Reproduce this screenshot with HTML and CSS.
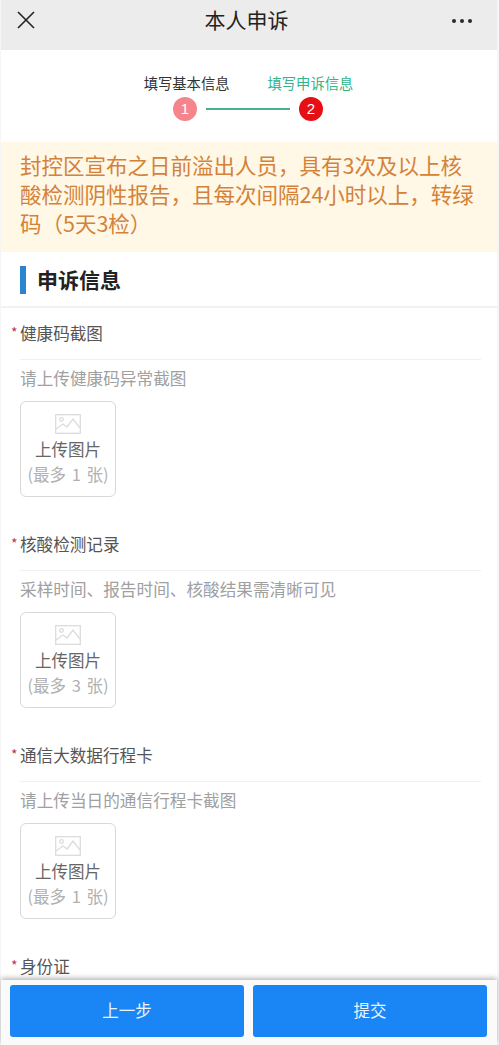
FILE: index.html
```html
<!DOCTYPE html>
<html lang="zh-CN">
<head>
<meta charset="utf-8">
<title>本人申诉</title>
<link rel="stylesheet" href="styles.css">
</head>
<body>
<div class="app">
  <header class="nav">
    <svg class="nav-close" width="20" height="20" viewBox="0 0 20 20"><path d="M2 2 L18 18 M18 2 L2 18" stroke="#222" stroke-width="1.6" fill="none"/></svg>
    <h1 class="nav-title">本人申诉</h1>
    <div class="nav-more"><i></i><i></i><i></i></div>
  </header>
  <main class="content">
    <section class="steps">
      <div class="step-labels">
        <span class="step-label">填写基本信息</span>
        <span class="step-label step-label-active">填写申诉信息</span>
      </div>
      <div class="step-track">
        <span class="step-dot step-dot-done">1</span>
        <span class="step-line"></span>
        <span class="step-dot step-dot-active">2</span>
      </div>
    </section>
    <section class="notice">封控区宣布之日前溢出人员，具有3次及以上核酸检测阴性报告，且每次间隔24小时以上，转绿码（5天3检）</section>
    <h2 class="section-title"><span class="section-bar"></span><span class="section-text">申诉信息</span></h2>
    <div class="form">
      <div class="field">
        <div class="field-label"><span class="req">*</span>健康码截图</div>
        <div class="field-body">
          <p class="hint">请上传健康码异常截图</p>
          <div class="upload">
            <svg class="upload-icon" width="26" height="20" viewBox="0 0 26 20"><g fill="none" stroke="#dcdcdc" stroke-width="1.3"><rect x=".7" y=".7" width="24.6" height="18.6"/><path d="M1 15 L8 10 L12 13 L18 5 L25 14"/><circle cx="6.500" cy="5.500" r="1.800"/></g></svg>
            <span class="upload-text">上传图片</span>
            <span class="upload-limit">(最多 1 张)</span>
          </div>
        </div>
      </div>
      <div class="field">
        <div class="field-label"><span class="req">*</span>核酸检测记录</div>
        <div class="field-body">
          <p class="hint">采样时间、报告时间、核酸结果需清晰可见</p>
          <div class="upload">
            <svg class="upload-icon" width="26" height="20" viewBox="0 0 26 20"><g fill="none" stroke="#dcdcdc" stroke-width="1.3"><rect x=".7" y=".7" width="24.6" height="18.6"/><path d="M1 15 L8 10 L12 13 L18 5 L25 14"/><circle cx="6.500" cy="5.500" r="1.800"/></g></svg>
            <span class="upload-text">上传图片</span>
            <span class="upload-limit">(最多 3 张)</span>
          </div>
        </div>
      </div>
      <div class="field">
        <div class="field-label"><span class="req">*</span>通信大数据行程卡</div>
        <div class="field-body">
          <p class="hint">请上传当日的通信行程卡截图</p>
          <div class="upload">
            <svg class="upload-icon" width="26" height="20" viewBox="0 0 26 20"><g fill="none" stroke="#dcdcdc" stroke-width="1.3"><rect x=".7" y=".7" width="24.6" height="18.6"/><path d="M1 15 L8 10 L12 13 L18 5 L25 14"/><circle cx="6.500" cy="5.500" r="1.800"/></g></svg>
            <span class="upload-text">上传图片</span>
            <span class="upload-limit">(最多 1 张)</span>
          </div>
        </div>
      </div>
      <div class="field">
        <div class="field-label"><span class="req">*</span>身份证</div>
      </div>
    </div>
  </main>
  <footer class="actions">
    <button class="btn" type="button">上一步</button>
    <button class="btn" type="button">提交</button>
  </footer>
</div>
</body>
</html>
```
FILE: styles.css
```css
* { box-sizing: border-box; }
html, body { margin: 0; padding: 0; height: 100%; overflow: hidden; background: #f6f6f6; }
body { font-family: "Noto Sans CJK SC", "Liberation Sans", sans-serif; }
.app { width: 496px; height: 1045px; margin-left: 1px; display: flex; flex-direction: column; background: #fff; }

.nav { flex: none; height: 50px; background: #ececec; display: flex; align-items: center; justify-content: space-between; padding: 0 25px 10px 15px; position: relative; }
.nav-title { position: absolute; left: 0; right: 5px; top: 4px; margin: 0; text-align: center; font-size: 21px; line-height: 30px; font-weight: 400; color: #222; }
.nav-more { display: flex; gap: 3.500px; margin-top: 2px; }
.nav-more i { width: 4.500px; height: 4.500px; border-radius: 50%; background: #2a2a2a; }

.content { flex: 1; min-height: 0; overflow: hidden; }

.steps { height: 92px; padding-top: 23px; }
.step-labels { display: flex; justify-content: center; gap: 38px; padding-right: 1px; }
.step-label { font-size: 14.300px; line-height: 20px; color: #333; }
.step-label-active { color: #35b38a; }
.step-track { display: flex; justify-content: center; align-items: center; margin-top: 4px; padding-right: 2px; }
.step-dot { width: 24px; height: 24px; border-radius: 50%; color: #fff; font: 15px/24px "Liberation Sans", sans-serif; text-align: center; }
.step-dot-done { background: #f5848d; }
.step-dot-active { background: #e60f14; }
.step-line { width: 84px; height: 2px; margin: 0 9px; background: #48b08f; }

.notice { height: 110px; padding: 8px 19px 0; background: #fff8e6; color: #d4823a; font-size: 21.500px; line-height: 29px; }

.section-title { margin: 0; height: 56px; display: flex; align-items: center; gap: 11px; padding: 0 0 0 19px; font-size: 21px; font-weight: 700; color: #222; border-bottom: 2px solid #f2f2f2; }
.section-bar { width: 6px; height: 28px; margin-top: 2px; background: #2b84cf; }

.form { padding: 12px 0 0 19px; }
.field { height: 211px; }
.field-label { position: relative; height: 40px; margin-right: 16px; font-size: 16.600px; line-height: 26px; color: #555; border-bottom: 1px solid #f0f0f0; }
.req { position: absolute; left: -9px; top: -1px; color: #c0344a; font-size: 14px; }
.hint { margin: 0; padding-top: 4px; height: 34px; font-size: 16.650px; line-height: 28px; color: #a0a0a0; white-space: nowrap; }
.upload { width: 96px; height: 96px; margin-top: 7px; border: 1px solid #d8d8d8; border-radius: 6px; display: flex; flex-direction: column; align-items: center; padding-top: 12px; }
.upload-text { margin-top: 3px; font-size: 16.500px; line-height: 25px; color: #666; }
.upload-limit { margin-top: 0; font-size: 16.500px; line-height: 24px; word-spacing: 2px; color: #b0b0b0; white-space: nowrap; }

.actions { flex: none; height: 65px; display: flex; gap: 9px; padding: 5px 10px 8px 9px; background: #fafafa; position: relative; box-shadow: 0 -2px 5px rgba(0,0,0,.28); }
.btn { flex: 1; border: 0; border-radius: 3px; padding-bottom: 2px; background: #1a86f5; color: #e8f4ff; font: 16.500px/1 "Noto Sans CJK SC", sans-serif; }
```
